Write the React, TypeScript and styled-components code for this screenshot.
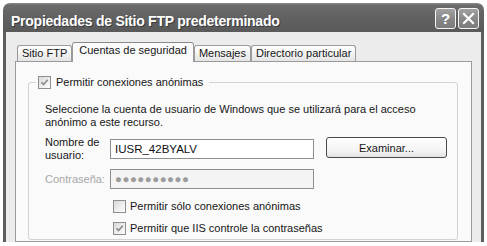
import React from "react";
import styled, { createGlobalStyle } from "styled-components";

const Global = createGlobalStyle`
  html, body { margin: 0; padding: 0; background: #fff; }
  body { font-family: "Liberation Sans", Arial, sans-serif; font-size: 11px; color: #161616; }
`;

const Page = styled.div`
  width: 487px;
  height: 246px;
  box-sizing: border-box;
  padding: 3px 3px 0 3px;
`;

const Window = styled.div`
  width: 481px;
  height: 239px;
  display: flex;
  flex-direction: column;
  overflow: hidden;
  border-radius: 7px 7px 0 0;
`;

const TitleBar = styled.div`
  height: 29px;
  flex: none;
  display: flex;
  align-items: flex-start;
  padding: 0 5px 0 8px;
  background: linear-gradient(#8c8c8c 0, #6c6c6c 2px, #626262 45%, #5a5a5a 100%);
`;

const Title = styled.div`
  flex: 1;
  padding-top: 7px;
  line-height: 22px;
  color: #fff;
  font-family: "Liberation Sans", Arial, sans-serif;
  font-weight: bold;
  font-size: 14px;
  letter-spacing: -0.25px;
  text-shadow: 1px 1px 0 #3a3a3a;
`;

const CaptionButtons = styled.div`
  display: flex;
  gap: 2px;
  padding-top: 5px;
`;

const CaptionButton = styled.div`
  width: 21px;
  height: 21px;
  box-sizing: border-box;
  border: 1px solid #f4f4f4;
  border-radius: 3px;
  background: linear-gradient(#a0a0a0, #858585 60%, #7c7c7c);
  display: flex;
  align-items: center;
  justify-content: center;
  color: #fff;
  font-family: "Liberation Sans", Arial, sans-serif;
  font-weight: bold;
  font-size: 15px;
  line-height: 1;
`;

const Frame = styled.div`
  flex: 1;
  display: flex;
  flex-direction: column;
  background: #ececec;
  border-left: 3px solid #5e5e5e;
  border-right: 3px solid #5e5e5e;
  padding: 10px 9px 0 9px;
  min-height: 0;
`;

const TabStrip = styled.div`
  display: flex;
  align-items: flex-end;
  height: 20px;
  padding-left: 2px;
  margin-bottom: -1px;
  position: relative;
  z-index: 1;
`;

const Tab = styled.div<{ $active?: boolean }>`
  box-sizing: border-box;
  border: 1px solid #9a9a9a;
  border-bottom: none;
  border-radius: 3px 3px 0 0;
  white-space: nowrap;
  line-height: 15px;
  ${(p) =>
    p.$active
      ? `
    height: 20px;
    padding: 0 6px;
    background: #fafafa;
    border-top: 1px solid #8a8a8a;
  `
      : `
    height: 16px;
    margin-bottom: 1px;
    padding: 0 4px;
    background: linear-gradient(#ffffff, #f0f0f0 60%, #e4e4e4);
  `}
`;

const Panel = styled.div`
  flex: 1;
  border: 1px solid #9a9a9a;
  background: #fafafa;
  padding: 14px 13px 0 12px;
`;

const Group = styled.fieldset`
  margin: 0;
  min-inline-size: 0;
  border: 1px solid #d2d2d2;
  border-radius: 3px;
  padding: 14px 10px 4px 16px;
`;

const Legend = styled.legend`
  margin-left: -9px;
  padding: 0 6px 0 2px;
  display: flex;
  align-items: center;
  gap: 5px;
  line-height: 13px;
`;

const Box = styled.span`
  flex: none;
  width: 13px;
  height: 13px;
  box-sizing: border-box;
  border: 1px solid #8e8e8e;
  background: linear-gradient(135deg, #d8d8d8, #f0f0f0 60%, #fbfbfb);
  display: inline-flex;
  align-items: center;
  justify-content: center;
`;

const Desc = styled.p`
  margin: 0;
  line-height: 13px;
`;

const Row = styled.div<{ $gap: number }>`
  display: flex;
  align-items: center;
  margin-top: ${(p) => p.$gap}px;
`;

const FieldLabel = styled.div<{ $disabled?: boolean }>`
  width: 65px;
  flex: none;
  align-self: flex-start;
  line-height: 13px;
  color: ${(p) => (p.$disabled ? "#a8a8a8" : "inherit")};
`;

const Input = styled.div<{ $disabled?: boolean }>`
  width: 204px;
  height: 20px;
  flex: none;
  box-sizing: border-box;
  border: 1px solid #8f8f8f;
  background: ${(p) => (p.$disabled ? "#f4f4f4" : "#fff")};
  padding-left: 4px;
  display: flex;
  align-items: center;
  font-size: 11.5px;
  color: ${(p) => (p.$disabled ? "#9c9c9c" : "#111")};
  letter-spacing: ${(p) => (p.$disabled ? "0.5px" : "0")};
`;

const Button = styled.div`
  width: 126px;
  height: 21px;
  margin-left: 12px;
  margin-top: 1px;
  align-self: flex-start;
  box-sizing: border-box;
  border: 1px solid #4a4a4a;
  border-radius: 3px;
  background: linear-gradient(#ffffff, #f3f3f3 70%, #e2e2e2);
  display: flex;
  align-items: center;
  justify-content: center;
`;

const CheckRow = styled.label<{ $gap: number }>`
  display: flex;
  align-items: center;
  gap: 4px;
  margin-left: 68px;
  margin-top: ${(p) => p.$gap}px;
  line-height: 13px;
`;

const Check = ({ on }: { on?: boolean }) => (
  <Box>
    {on && (
      <svg width="11" height="11" viewBox="0 0 11 11">
        <path d="M2.5 5.2 L4.5 7.5 L8.8 2.8" fill="none" stroke="#8a8a8a" strokeWidth="1.7" />
      </svg>
    )}
  </Box>
);

export default function App() {
  return (
    <Page>
      <Global />
      <Window>
        <TitleBar>
          <Title>Propiedades de Sitio FTP predeterminado</Title>
          <CaptionButtons>
            <CaptionButton>?</CaptionButton>
            <CaptionButton>
              <svg width="13" height="13" viewBox="0 0 13 13">
                <path d="M2 2 L11 11 M11 2 L2 11" stroke="#fff" strokeWidth="2.2" strokeLinecap="square" />
              </svg>
            </CaptionButton>
          </CaptionButtons>
        </TitleBar>
        <Frame>
          <TabStrip>
            <Tab>Sitio FTP</Tab>
            <Tab $active>Cuentas de seguridad</Tab>
            <Tab>Mensajes</Tab>
            <Tab>Directorio particular</Tab>
          </TabStrip>
          <Panel>
            <Group>
              <Legend>
                <Check on />
                <span>Permitir conexiones anónimas</span>
              </Legend>
              <Desc>
                Seleccione la cuenta de usuario de Windows que se utilizará para el acceso
                <br />
                anónimo a este recurso.
              </Desc>
              <Row $gap={7}>
                <FieldLabel>
                  Nombre de
                  <br />
                  usuario:
                </FieldLabel>
                <Input>IUSR_42BYALV</Input>
                <Button>Examinar...</Button>
              </Row>
              <Row $gap={7}>
                <FieldLabel $disabled style={{ alignSelf: "center" }}>Contraseña:</FieldLabel>
                <Input $disabled>●●●●●●●●●●</Input>
              </Row>
              <CheckRow $gap={11}>
                <Check />
                <span>Permitir sólo conexiones anónimas</span>
              </CheckRow>
              <CheckRow $gap={9}>
                <Check on />
                <span>Permitir que IIS controle la contraseñas</span>
              </CheckRow>
            </Group>
          </Panel>
        </Frame>
      </Window>
    </Page>
  );
}
